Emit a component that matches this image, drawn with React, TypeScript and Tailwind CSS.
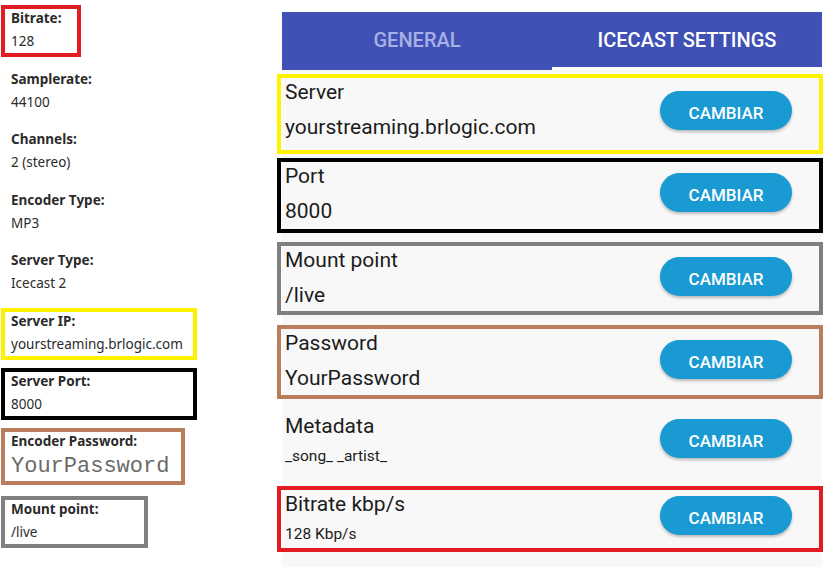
const leftItems = [
  { label: 'Bitrate:', value: '128', box: 'border-[#e31b23] w-[80px]', mt: 'mt-[5px]' },
  { label: 'Samplerate:', value: '44100', box: 'border-transparent', mt: 'mt-[9px]' },
  { label: 'Channels:', value: '2 (stereo)', box: 'border-transparent', mt: 'mt-[8px]' },
  { label: 'Encoder Type:', value: 'MP3', box: 'border-transparent', mt: 'mt-[9px]' },
  { label: 'Server Type:', value: 'Icecast 2', box: 'border-transparent', mt: 'mt-[8px]' },
  { label: 'Server IP:', value: 'yourstreaming.brlogic.com', box: 'border-[#fff200] w-[196px]', mt: 'mt-[9px]' },
  { label: 'Server Port:', value: '8000', box: 'border-black w-[196px]', mt: 'mt-[8px]' },
  { label: 'Encoder Password:', value: 'YourPassword', box: 'border-[#b97d5c] w-[184px]', mt: 'mt-[8px]', mono: true },
  { label: 'Mount point:', value: '/live', box: 'border-[#7f7f7f] w-[147px]', mt: 'mt-[11px]' },
];

const rows = [
  { label: 'Server', value: 'yourstreaming.brlogic.com', box: 'border-[#fff200]', mt: 'mt-[4px]', h: 'h-[80px]', btn: 'mt-[13px]' },
  { label: 'Port', value: '8000', box: 'border-black', mt: 'mt-[4px]', h: 'h-[75px]', btn: 'mt-[11px]' },
  { label: 'Mount point', value: '/live', box: 'border-[#7f7f7f]', mt: 'mt-[9px]', h: 'h-[73px]', btn: 'mt-[11px]' },
  { label: 'Password', value: 'YourPassword', box: 'border-[#b97d5c]', mt: 'mt-[10px]', h: 'h-[74px]', btn: 'mt-[11px]' },
  { label: 'Metadata', value: '_song_ _artist_', box: 'border-transparent', mt: 'mt-[9px]', h: 'h-[74px]', btn: 'mt-[7px]', small: true },
  { label: 'Bitrate kbp/s', value: '128 Kbp/s', box: 'border-[#e31b23]', mt: 'mt-[4px]', h: 'h-[66px]', btn: 'mt-[6px]', small: true },
];

function LeftItem({ item }: { item: (typeof leftItems)[number] }) {
  return (
    <div className={`border-4 pl-[6px] pb-[1px] ${item.box} ${item.mt}`}>
      <p className="h-[18px] text-[13.5px] font-bold leading-[18px] text-[#2b2b2b]">{item.label}</p>
      {item.mono ? (
        <p className="mt-[4px] h-[26px] font-['Liberation_Mono',monospace] text-[22px] leading-[26px] text-[#6a6a6a]">
          {item.value}
        </p>
      ) : (
        <p className="mt-[3px] h-[22px] text-[13.5px] leading-[22px] text-[#2b2b2b]">{item.value}</p>
      )}
    </div>
  );
}

function SettingRow({ row }: { row: (typeof rows)[number] }) {
  return (
    <div className={`-ml-[5px] -mr-[1px] flex items-start justify-between border-4 pl-[4px] pr-[27px] ${row.box} ${row.mt} ${row.h}`}>
      <div className="pt-[2px]">
        <p className="text-[21px] leading-[24px] text-[#1c1c1c]">{row.label}</p>
        {row.small ? (
          <p className="mt-[8px] text-[15.5px] leading-[20px] text-[#1c1c1c]">{row.value}</p>
        ) : (
          <p className="mt-[11px] text-[21px] leading-[24px] text-[#1c1c1c]">{row.value}</p>
        )}
      </div>
      <button
        className={`flex h-[39px] w-[132px] items-center justify-center rounded-full bg-[#199ad3] pt-[6px] text-[17px] font-medium text-white shadow-[0_2px_3px_rgba(0,0,0,0.25)] ${row.btn}`}
      >
        CAMBIAR
      </button>
    </div>
  );
}

export default function App() {
  return (
    <div className="flex h-[567px] w-[837px] overflow-hidden bg-white">
      <div className="flex w-[277px] shrink-0 flex-col pl-[1px] font-['Noto_Sans',sans-serif]">
        {leftItems.map((item) => (
          <LeftItem key={item.label} item={item} />
        ))}
      </div>

      <div className="flex w-[546px] flex-col pt-[12px] font-['Roboto',sans-serif]">
        <div className="ml-[5px] mr-[1px] flex h-[58px] bg-[#3f51b5]">
          <div className="flex flex-1 items-center justify-center pb-[3px] text-[20px] font-medium text-[#a7b1e6]">
            GENERAL
          </div>
          <div className="flex flex-1 flex-col">
            <div className="flex flex-1 items-center justify-center text-[20px] font-medium text-white">
              ICECAST SETTINGS
            </div>
            <div className="h-[3px] bg-white" />
          </div>
        </div>
        <div className="ml-[5px] mr-[1px] flex-1 bg-[#f8f8f8]">
          {rows.map((row) => (
            <SettingRow key={row.label} row={row} />
          ))}
        </div>
      </div>
    </div>
  );
}
